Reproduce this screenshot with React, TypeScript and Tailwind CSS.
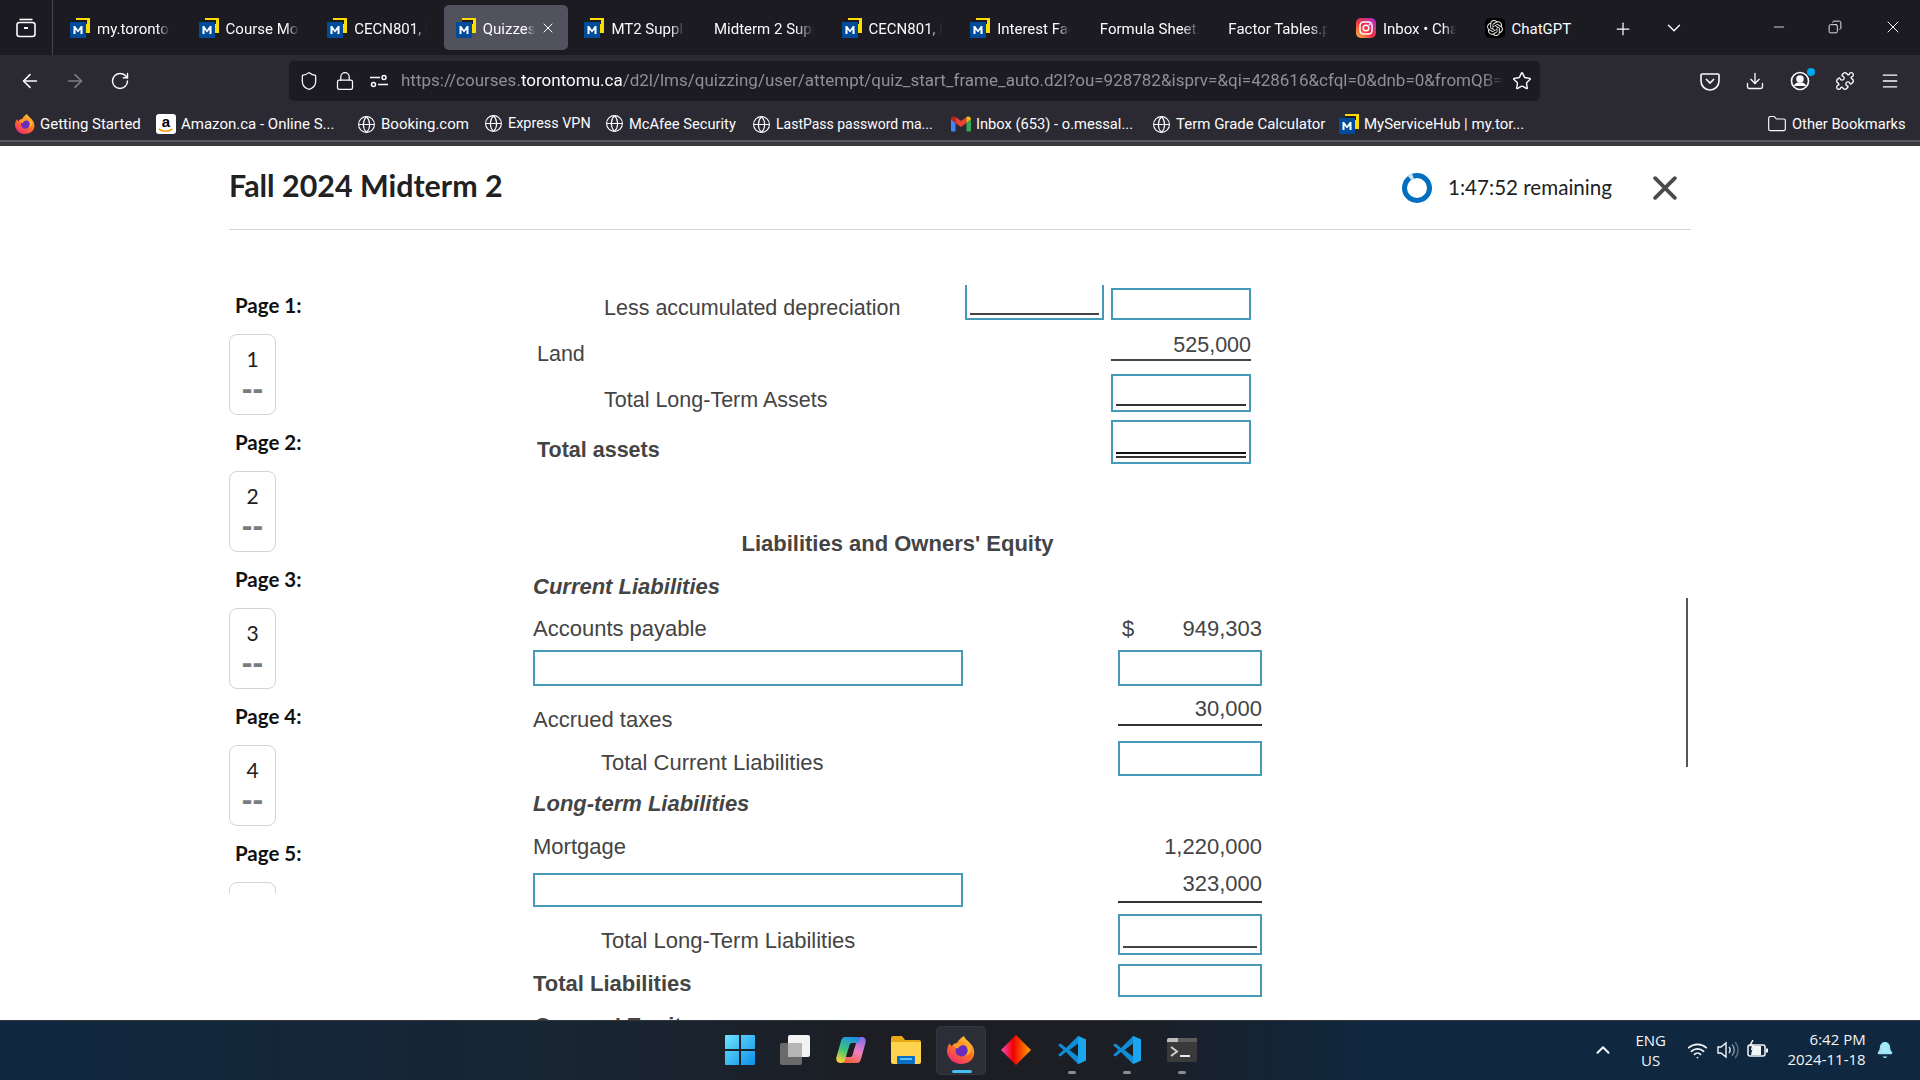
import React from "react";
import {
  ArrowLeft, ArrowRight, RotateCw, Shield, Lock, Star, Download, Menu, Puzzle, Globe, Folder, Plus,
  ChevronDown, ChevronUp, Minus, X, Wifi, Bell, Copy,
} from "lucide-react";
import { SiOpenai } from "react-icons/si";

const chromeFont = "font-['Roboto','Liberation_Sans',sans-serif]";
const sheetFont = "font-['Liberation_Sans',Arial,sans-serif]";
const fade = "[mask-image:linear-gradient(to_right,black_82%,transparent)]";

function MLogo({ className = "" }: { className?: string }) {
  return (
    <svg viewBox="0 0 20 20" className={`w-5 h-5 shrink-0 ${className}`}>
      <rect x="6" y="0" width="14" height="15" fill="#ffdc00" />
      <rect x="6" y="2" width="11" height="4" fill="#1c1b22" />
      <rect x="0" y="4" width="16" height="16" fill="#004c9b" />
      <path d="M3.5 16V8h1.7l2.8 4 2.8-4h1.7v8h-2v-4.6L8 14.6l-2.500-3.200V16z" fill="#fff" />
    </svg>
  );
}

function Instagram() {
  return (
    <svg viewBox="0 0 20 20" className="w-5 h-5 shrink-0">
      <defs>
        <linearGradient id="ig" x1="0" y1="1" x2="1" y2="0">
          <stop offset="0" stopColor="#fdc04a" />
          <stop offset="0.45" stopColor="#f5323f" />
          <stop offset="1" stopColor="#a52fd6" />
        </linearGradient>
      </defs>
      <rect width="20" height="20" rx="5" fill="url(#ig)" />
      <rect x="4" y="4" width="12" height="12" rx="3.500" fill="none" stroke="#fff" strokeWidth="1.500" />
      <circle cx="10" cy="10" r="2.800" fill="none" stroke="#fff" strokeWidth="1.500" />
      <circle cx="13.600" cy="6.400" r="0.900" fill="#fff" />
    </svg>
  );
}

function FirefoxIcon({ size }: { size: number }) {
  return (
    <svg viewBox="0 0 28 28" style={{ width: size, height: size }} className="shrink-0">
      <defs>
        <linearGradient id={`ff${size}`} x1="0.8" y1="0" x2="0.2" y2="1">
          <stop offset="0" stopColor="#ffd23f" />
          <stop offset="0.45" stopColor="#ff7a1a" />
          <stop offset="1" stopColor="#f0247a" />
        </linearGradient>
      </defs>
      <path d="M17 0c1 3 3 4 6 7 3 3 5 7 4 12-1 5-6 9-13 9C7 28 1 23 0 16c0-4 1-7 3-9 0 2 1 3 2 3 1-2 3-3 5-3 1-3 4-5 7-7z" fill={`url(#ff${size})`} />
      <circle cx="14.500" cy="14.500" r="6" fill="#6a2bc0" />
      <path d="M6 9c3-2 9-3 13 0-4-.5-7 1-8 3.500-2 0-4-1.500-5-3.500z" fill="#ff9a2e" />
      <path d="M19 8c3 3 3 9-1 12 3-1 6-3 6-7 0-2-2-4-5-5z" fill="#ffb52e" />
    </svg>
  );
}

function AmazonIcon() {
  return (
    <div className="relative w-5 h-5 rounded-[3px] bg-white shrink-0 flex justify-center">
      <span className="font-['Liberation_Sans',sans-serif] font-bold text-[15px] leading-[15px] text-black">a</span>
      <svg viewBox="0 0 20 6" className="absolute bottom-[1px] left-[2px] w-4 h-[5px]">
        <path d="M1 1c5 4 12 4 17 0" fill="none" stroke="#f90" strokeWidth="2" />
      </svg>
    </div>
  );
}

function GmailIcon() {
  return (
    <svg viewBox="0 0 20 16" className="w-5 h-4 shrink-0">
      <path d="M0 3v11c0 1 .5 1.500 1.500 1.500H4.500V7z" fill="#4285f4" />
      <path d="M15.500 7v8.500h3c1 0 1.500-.5 1.500-1.500V3z" fill="#34a853" />
      <path d="M4.500 7 10 11l5.500-4V1L10 5 4.500 1z" fill="#ea4335" />
      <path d="M0 3c0-2 2.500-3 4.500-2v6z" fill="#c5221f" />
      <path d="M20 3c0-2-2.500-3-4.500-2v6z" fill="#fbbc04" />
    </svg>
  );
}

function VSCode() {
  return (
    <svg viewBox="0 0 30 30" className="w-[30px] h-[30px] shrink-0">
      <path d="M21 1 9 13 3.500 8.500 1 10l5.500 5L1 20l2.500 1.500L9 17l12 12 8-3.500V4.500z" fill="#0f8ed8" />
      <path d="M21 1l8 3.500v21L21 29z" fill="#1ba5ef" />
      <path d="M21 8.500 12.500 15l8.500 6.500z" fill="#1c1e24" />
    </svg>
  );
}

function Tab({ label, icon, active }: { label: string; icon?: React.ReactNode; active?: boolean }) {
  return (
    <div className={`w-[124px] h-[45px] mr-[4.6px] shrink-0 rounded-[5px] flex items-center pl-[12px] ${active ? "bg-[#52525e]" : ""}`}>
      {icon}
      <span className={`${icon ? "ml-[7px]" : "ml-[1px]"} mt-[3px] ${active ? "w-[52px]" : icon ? "w-[73px]" : "w-[100px]"} overflow-hidden whitespace-nowrap text-[15px] text-[#fbfbfe] ${fade}`}>
        {label}
      </span>
      {active && <X className="w-4 h-4 ml-[5px] text-[#fbfbfe]" strokeWidth={1.500} />}
    </div>
  );
}

function TabBar() {
  const m = <MLogo />;
  return (
    <div className={`h-[55px] bg-[#1c1b22] flex items-center ${chromeFont} shrink-0`}>
      <div className="w-[53px] h-full flex items-center justify-center border-r border-[#45454c] shrink-0">
        <svg viewBox="0 0 20 20" className="w-5 h-5" fill="none" stroke="#fbfbfe" strokeWidth="1.600">
          <rect x="1" y="4.500" width="18" height="14" rx="2.500" />
          <path d="M3.500 1.500h13" />
          <path d="M8 10h4" strokeWidth="2" />
        </svg>
      </div>
      <div className="w-[5px] shrink-0" />
      <Tab label="my.toronto" icon={m} />
      <Tab label="Course Mo" icon={m} />
      <Tab label="CECN801, M" icon={m} />
      <Tab label="Quizzes" icon={m} active />
      <Tab label="MT2 Supple" icon={m} />
      <Tab label="Midterm 2 Supp" />
      <Tab label="CECN801, M" icon={m} />
      <Tab label="Interest Fac" icon={m} />
      <Tab label="Formula Sheet.pdf" />
      <Tab label="Factor Tables.pdf" />
      <Tab label="Inbox • Chats" icon={<Instagram />} />
      <div className="w-[124px] mr-[4.6px] shrink-0 flex items-center pl-[12px]">
        <div className="w-5 h-5 rounded-[5px] bg-black flex items-center justify-center shrink-0">
          <SiOpenai className="w-4 h-4 text-[#e5e5e5]" />
        </div>
        <span className="ml-[7px] mt-[3px] text-[15px] text-[#fbfbfe]">ChatGPT</span>
      </div>
      <Plus className="w-[20px] h-[20px] ml-[12px] mt-[2px] text-[#fbfbfe]" strokeWidth={1.500} />
      <ChevronDown className="w-[22px] h-[22px] ml-[30px] text-[#fbfbfe]" strokeWidth={1.500} />
      <Minus className="w-[16px] h-[16px] ml-[86px] mb-[1px] text-[#fbfbfe]" strokeWidth={1.200} />
      <Copy className="w-[14px] h-[14px] ml-[41px] mb-[1px] text-[#fbfbfe] -scale-x-100" strokeWidth={1.500} />
      <X className="w-[20px] h-[20px] ml-[41px] mb-[1px] text-[#fbfbfe]" strokeWidth={1.200} />
    </div>
  );
}

function UrlBar() {
  return (
    <div className="w-[1251px] h-[40px] ml-[159px] rounded-[5px] bg-[#1c1b22] flex items-center text-[#fbfbfe]">
      <Shield className="w-5 h-5 ml-[10px]" strokeWidth={1.500} />
      <Lock className="w-5 h-5 ml-[16px]" strokeWidth={1.500} />
      <svg viewBox="0 0 18 14" className="w-[18px] h-[14px] ml-[15px]" fill="none" stroke="#fbfbfe" strokeWidth="1.500">
        <path d="M0 3.500h10M8 10.500h10" />
        <circle cx="14" cy="3.500" r="2" />
        <circle cx="3.500" cy="10.500" r="2" />
      </svg>
      <div className="w-[1104px] ml-[13px] overflow-hidden whitespace-nowrap text-[17px] text-[#8f8f96] [mask-image:linear-gradient(to_right,black_98%,transparent)]">
        https://courses.<span className="text-[#fbfbfe]">torontomu.ca</span>/d2l/lms/quizzing/user/attempt/quiz_start_frame_auto.d2l?ou=928782&amp;isprv=&amp;qi=428616&amp;cfql=0&amp;dnb=0&amp;fromQB=1
      </div>
      <Star className="w-5 h-5 ml-[7px]" strokeWidth={1.700} />
    </div>
  );
}

function Toolbar() {
  return (
    <div className="h-[45px] mt-[3px] flex items-center text-[#fbfbfe] shrink-0">
      <ArrowLeft className="w-[22px] h-[22px] ml-[19px]" strokeWidth={1.700} />
      <ArrowRight className="w-[22px] h-[22px] ml-[23px] text-[#7d7d85]" strokeWidth={1.700} />
      <RotateCw className="w-5 h-5 ml-[24px]" strokeWidth={1.700} />
      <UrlBar />
      <svg viewBox="0 0 20 20" className="w-5 h-5 ml-[160px]" fill="none" stroke="#fbfbfe" strokeWidth="1.600">
        <path d="M2 3h16a1 1 0 0 1 1 1v6a9 9 0 0 1-18 0V4a1 1 0 0 1 1-1z" />
        <path d="M6 8l4 4 4-4" />
      </svg>
      <Download className="w-5 h-5 ml-[25px]" strokeWidth={1.600} />
      <div className="relative ml-[25px]">
        <svg viewBox="0 0 20 20" className="w-5 h-5" fill="none" stroke="#fbfbfe" strokeWidth="1.600">
          <circle cx="10" cy="10" r="8.500" />
          <circle cx="10" cy="8" r="3" fill="#fbfbfe" />
          <path d="M4.500 15c1-2 3-3 5.500-3s4.500 1 5.500 3" fill="#fbfbfe" />
        </svg>
        <span className="absolute -top-[3px] -right-[5px] w-[8px] h-[8px] rounded-full bg-[#00a8f0]" />
      </div>
      <Puzzle className="w-5 h-5 ml-[25px]" strokeWidth={1.600} />
      <Menu className="w-5 h-5 ml-[25px]" strokeWidth={1.600} />
    </div>
  );
}

function Bookmark({ icon, label, w, cls = "text-[15px]" }: { icon: React.ReactNode; label: string; w: string; cls?: string }) {
  return (
    <div className={`${w} shrink-0 flex items-center gap-[5px] whitespace-nowrap overflow-hidden`}>
      {icon}
      <span className={`${cls} text-[#fbfbfe]`}>{label}</span>
    </div>
  );
}

function Bookmarks() {
  const g = <Globe className="w-[19px] h-[19px] shrink-0 text-[#fbfbfe]" strokeWidth={1.400} />;
  return (
    <div className="shrink-0 bg-[#38383d]">
      <div className="h-[32px] pt-[5px] box-content flex items-center pl-[15px] bg-[#2b2a33] border-b-2 border-[#56565b]">
        <Bookmark w="w-[141px]" icon={<FirefoxIcon size={20} />} label="Getting Started" />
        <Bookmark w="w-[201px]" icon={<AmazonIcon />} label="Amazon.ca - Online S..." />
        <Bookmark w="w-[127px]" icon={g} label="Booking.com" />
        <Bookmark w="w-[121px]" icon={g} cls="text-[14.4px]" label="Express VPN" />
        <Bookmark w="w-[147px]" icon={g} cls="text-[14.7px]" label="McAfee Security" />
        <Bookmark w="w-[199px]" icon={g} cls="text-[14px]" label="LastPass password ma..." />
        <Bookmark w="w-[201px]" icon={<GmailIcon />} cls="text-[14.7px]" label="Inbox (653) - o.messal..." />
        <Bookmark w="w-[187px]" icon={g} label="Term Grade Calculator" />
        <Bookmark w="w-[428px]" icon={<MLogo />} label="MyServiceHub | my.tor..." />
        <Bookmark w="w-[140px]" icon={<Folder className="w-5 h-5 shrink-0 text-[#fbfbfe]" strokeWidth={1.400} />} cls="text-[14.7px]" label="Other Bookmarks" />
      </div>
      <div className="h-[4px]" />
    </div>
  );
}

function PageCard({ n, label }: { n: number; label: string }) {
  return (
    <div className="mb-[15px] shrink-0">
      <div className="h-[24px] pl-[6px] leading-[24px] text-[20.5px] font-bold text-[#111]">{label}</div>
      <div className="mt-[17px] w-[47px] h-[81px] rounded-[8px] border border-[#cdd5dc] flex flex-col items-center text-[#202122]">
        <span className="mt-[11px] text-[21px] leading-[26px]">{n}</span>
        <span className="mt-[4px] text-[32px] leading-[24px] font-bold text-[#777c80] font-['Liberation_Sans',sans-serif]">--</span>
      </div>
    </div>
  );
}

function Sidebar() {
  return (
    <div className="w-[304px] h-[608px] shrink-0 overflow-hidden pt-[8px] font-['Lato',sans-serif]">
      <PageCard n={1} label="Page 1:" />
      <PageCard n={2} label="Page 2:" />
      <PageCard n={3} label="Page 3:" />
      <PageCard n={4} label="Page 4:" />
      <PageCard n={5} label="Page 5:" />
    </div>
  );
}

const boxCls = "border-2 border-[#469ab6] bg-white shrink-0";
const txt = "text-[22px] leading-[28px] text-[#444] whitespace-nowrap";
const txtU = "text-[21.5px] leading-[28px] text-[#444] whitespace-nowrap";
const bold = "text-[22px] leading-[28px] text-[#444] font-bold whitespace-nowrap";
const boldU = "text-[21.5px] leading-[28px] text-[#444] font-bold whitespace-nowrap";
const boldItalic = "text-[22px] leading-[28px] text-[#444] font-bold italic whitespace-nowrap";

function BalanceSheet() {
  return (
    <div className={`flex-1 h-[735px] ${sheetFont}`}>
      <div className="w-[718px]">
        <div className="h-[35px] flex">
          <div className={`${txtU} pl-[71px] pt-[9px] w-[432px]`}>Less accumulated depreciation</div>
          <div className={`${boxCls} border-t-0 w-[139px] h-[35px] flex items-end px-[3px] pb-[3px]`}>
            <div className="w-full h-[2px] bg-[#444]" />
          </div>
          <div className={`${boxCls} ml-[7px] mt-[3px] w-[140px] h-[32px]`} />
        </div>
        <div className="h-[41px] flex justify-between">
          <div className={`${txtU} pl-[4px] pt-[20px]`}>Land</div>
          <div className={`${txtU} w-[140px] h-[41px] pt-[11px] text-right border-b-2 border-[#444]`}>525,000</div>
        </div>
        <div className="mt-[13px] h-[38px] flex justify-between">
          <div className={`${txtU} pl-[71px] pt-[12px]`}>Total Long-Term Assets</div>
          <div className={`${boxCls} w-[140px] h-[38px] flex items-end px-[3px] pb-[4px]`}>
            <div className="w-full h-[2px] bg-[#333]" />
          </div>
        </div>
        <div className="mt-[8px] h-[44px] flex justify-between">
          <div className={`${boldU} pl-[4px] pt-[16px]`}>Total assets</div>
          <div className={`${boxCls} w-[140px] h-[44px] flex flex-col justify-end gap-[2px] px-[3px] pb-[4px]`}>
            <div className="w-full h-[2px] bg-[#111]" />
            <div className="w-full h-[2px] bg-[#333]" />
          </div>
        </div>
      </div>
      <div className="w-[729px]">
        <div className={`${bold} mt-[66px] text-center`}>Liabilities and Owners' Equity</div>
        <div className={`${boldItalic} mt-[15px]`}>Current Liabilities</div>
        <div className="mt-[14px] flex justify-between">
          <div className={txt}>Accounts payable</div>
          <div className={`${txt} w-[140px] flex justify-between`}>
            <span>$</span>
            <span>949,303</span>
          </div>
        </div>
        <div className="mt-[7px] h-[36px] flex justify-between">
          <div className={`${boxCls} w-[430px] h-[36px]`} />
          <div className={`${boxCls} w-[144px] h-[36px]`} />
        </div>
        <div className="h-[40px] flex justify-between">
          <div className={`${txt} pt-[20px]`}>Accrued taxes</div>
          <div className={`${txt} w-[144px] h-[40px] pt-[9px] text-right border-b-2 border-[#333]`}>30,000</div>
        </div>
        <div className="mt-[15px] h-[35px] flex justify-between">
          <div className={`${txt} pl-[68px] pt-[8px]`}>Total Current Liabilities</div>
          <div className={`${boxCls} w-[144px] h-[35px]`} />
        </div>
        <div className={`${boldItalic} mt-[14px]`}>Long-term Liabilities</div>
        <div className="mt-[15px] flex justify-between">
          <div className={txt}>Mortgage</div>
          <div className={txt}>1,220,000</div>
        </div>
        <div className="mt-[12px] h-[34px] flex justify-between">
          <div className={`${boxCls} w-[430px] h-[34px]`} />
          <div className="text-[22px] leading-[22px] text-[#444] whitespace-nowrap w-[144px] h-[30px] text-right border-b-2 border-[#333]">323,000</div>
        </div>
        <div className="mt-[7px] h-[41px] flex justify-between">
          <div className={`${txt} pl-[68px] pt-[13px]`}>Total Long-Term Liabilities</div>
          <div className={`${boxCls} w-[144px] h-[41px] flex items-end px-[3px] pb-[5px]`}>
            <div className="w-full h-[2px] bg-[#444]" />
          </div>
        </div>
        <div className="mt-[9px] h-[33px] flex justify-between">
          <div className={`${bold} pt-[6px]`}>Total Liabilities</div>
          <div className={`${boxCls} w-[144px] h-[33px]`} />
        </div>
        <div className={`${boldItalic} mt-[15px]`}>Owners' Equity</div>
      </div>
    </div>
  );
}

function Page() {
  return (
    <div className="relative flex-1 min-h-0 overflow-hidden bg-white px-[229px]">
      <div className="h-[84px] flex items-center border-b border-[#cdd5dc] font-['Lato',sans-serif]">
        <h1 className="flex-1 text-[30.4px] font-bold text-[#202122] pb-[4px]">Fall 2024 Midterm 2</h1>
        <svg viewBox="0 0 30 30" className="w-[30px] h-[30px]">
          <circle cx="15" cy="15" r="12.500" fill="none" stroke="#006fbf" strokeWidth="5" />
          <path d="M7.500 5A12.500 12.500 0 0 1 11 3.100" fill="none" stroke="#cde3f3" strokeWidth="5" />
        </svg>
        <span className="ml-[16px] text-[20.6px] text-[#202122]">1:47:52 remaining</span>
        <svg viewBox="0 0 22 22" className="w-[24px] h-[24px] ml-[41px] mr-[14px]" fill="none" stroke="#494c4e" strokeWidth="3.500" strokeLinecap="round">
          <path d="M2 2l18 18M20 2 2 20" />
        </svg>
      </div>
      <div className="flex pt-[55px]">
        <Sidebar />
        <BalanceSheet />
      </div>
      <div className="absolute left-[1686px] top-[452px] w-[2px] h-[169px] bg-[#555]" />
    </div>
  );
}

function TrayText({ a, b, cls }: { a: string; b: string; cls: string }) {
  return (
    <div className={`flex flex-col ${cls} text-[15px] leading-[20px] text-[#f3f5f7] font-['Open_Sans',sans-serif]`}>
      <span>{a}</span>
      <span>{b}</span>
    </div>
  );
}

function TaskIcon({ children, box, dot }: { children: React.ReactNode; box?: boolean; dot?: "blue" | "gray" }) {
  return (
    <div className={`relative w-[50px] h-[49px] mr-[5.3px] shrink-0 rounded-[5px] flex items-center justify-center ${box ? "bg-[#2b2e37] border border-[#343741]" : ""}`}>
      {children}
      {dot === "blue" && <span className="absolute bottom-[1px] left-[15px] w-[20px] h-[3px] rounded-full bg-[#46bdf5]" />}
      {dot === "gray" && <span className="absolute bottom-[1px] left-[21px] w-[8px] h-[3px] rounded-full bg-[#8a8d92]" />}
    </div>
  );
}

function Taskbar() {
  return (
    <div className="h-[60px] shrink-0 flex items-center pb-[1px] border-t border-[#33353a] bg-[linear-gradient(to_right,#0f2840_0%,#1a2430_35%,#1c1e24_45%,#1c1e24_58%,#0f2840_72%,#0f2840_100%)]">
      <div className="w-[715px] shrink-0" />
      <TaskIcon>
        <svg viewBox="0 0 30 30" className="w-[30px] h-[30px]">
          <defs>
            <linearGradient id="win" x1="0" y1="0" x2="1" y2="1">
              <stop offset="0" stopColor="#6fe3ff" />
              <stop offset="1" stopColor="#0c8fe8" />
            </linearGradient>
          </defs>
          <path d="M0 1a1 1 0 0 1 1-1h13v14H0zM16 0h13a1 1 0 0 1 1 1v13H16zM0 16h14v14H1a1 1 0 0 1-1-1zM16 16h14v13a1 1 0 0 1-1 1H16z" fill="url(#win)" />
        </svg>
      </TaskIcon>
      <TaskIcon>
        <svg viewBox="0 0 30 30" className="w-[30px] h-[30px]">
          <rect x="0" y="8" width="22" height="22" rx="2" fill="#6a6a6a" />
          <rect x="8" y="0" width="22" height="22" rx="2" fill="#f2f2f2" />
          <rect x="8" y="8" width="14" height="14" fill="#b5b5b5" />
        </svg>
      </TaskIcon>
      <TaskIcon>
        <svg viewBox="0 0 30 30" className="w-[30px] h-[30px]">
          <defs>
            <linearGradient id="cp1" x1="0.7" y1="0" x2="0.3" y2="1">
              <stop offset="0" stopColor="#1f8fe8" />
              <stop offset="0.55" stopColor="#3fc37a" />
              <stop offset="1" stopColor="#f5d23b" />
            </linearGradient>
            <linearGradient id="cp2" x1="0.7" y1="0" x2="0.3" y2="1">
              <stop offset="0" stopColor="#8a6cf0" />
              <stop offset="0.5" stopColor="#f07fc0" />
              <stop offset="1" stopColor="#f5613a" />
            </linearGradient>
          </defs>
          <path d="M21 28H9c-2 0-3-1-3-2l2-4h6c1 0 2-.5 2.500-2L21 5c.5-2 2-3 4-3h1c3 0 4.500 3 3.500 6L25 24c-.7 2.500-2 4-4 4z" fill="url(#cp2)" />
          <path d="M9 2h12c2 0 3 1 3 2l-2 4h-6c-1 0-2 .5-2.500 2L9 25c-.5 2-2 3-4 3H4c-3 0-4.500-3-3.500-6L5 6c.7-2.500 2-4 4-4z" fill="url(#cp1)" />
        </svg>
      </TaskIcon>
      <TaskIcon>
        <svg viewBox="0 0 30 28" className="w-[30px] h-[28px]">
          <path d="M0 2a2 2 0 0 1 2-2h9l3 4h14a2 2 0 0 1 2 2v4H0z" fill="#e8a818" />
          <path d="M0 6h30v20a2 2 0 0 1-2 2H2a2 2 0 0 1-2-2z" fill="#ffd34e" />
          <rect x="6" y="20" width="18" height="8" rx="1" fill="#0a6fc2" />
          <rect x="9" y="22" width="12" height="2" fill="#5cc0f5" />
        </svg>
      </TaskIcon>
      <TaskIcon box dot="blue">
        <FirefoxIcon size={28} />
      </TaskIcon>
      <TaskIcon>
        <svg viewBox="0 0 30 30" className="w-[30px] h-[30px]">
          <defs>
            <linearGradient id="dia" x1="0" y1="0" x2="1" y2="0">
              <stop offset="0" stopColor="#f54fc0" />
              <stop offset="0.4" stopColor="#f00000" />
              <stop offset="1" stopColor="#ffa500" />
            </linearGradient>
          </defs>
          <path d="M15 0 30 15 15 30 0 15z" fill="url(#dia)" />
        </svg>
      </TaskIcon>
      <TaskIcon dot="gray"><VSCode /></TaskIcon>
      <TaskIcon dot="gray"><VSCode /></TaskIcon>
      <TaskIcon dot="gray">
        <svg viewBox="0 0 30 24" className="w-[30px] h-[24px]">
          <rect width="30" height="24" rx="2" fill="#3a3a3a" />
          <path d="M0 2a2 2 0 0 1 2-2h9v4H0z" fill="#bdbdbd" />
          <rect x="11" y="0" width="19" height="4" fill="#5c5c5c" />
          <path d="M4 9l6 4.500L4 18" fill="none" stroke="#d0d0d0" strokeWidth="2" />
          <rect x="13" y="17" width="10" height="2" fill="#e8e8e8" />
        </svg>
      </TaskIcon>
      <ChevronUp className="w-[22px] h-[22px] ml-[379px] text-[#f3f5f7]" strokeWidth={2.200} />
      <TrayText a="ENG" b="US" cls="ml-[22px] w-[30px] items-center" />
      <Wifi className="w-[21px] h-[21px] ml-[21px] text-[#f3f5f7]" strokeWidth={2} />
      <svg viewBox="0 0 22 20" className="w-[22px] h-[20px] ml-[9px]" fill="none" strokeWidth="1.400">
        <path d="M1 7v6h3l5 4V3L4 7z" stroke="#f3f5f7" />
        <path d="M12 7c1.500 1.500 1.500 4.500 0 6" stroke="#f3f5f7" />
        <path d="M15 4.500c3 3 3 8 0 11" stroke="#8d98a3" />
        <path d="M18 2c4 4 4 12 0 16" stroke="#5b6a78" />
      </svg>
      <svg viewBox="0 0 22 20" className="w-[22px] h-[20px] ml-[8px]" fill="none" stroke="#f3f5f7" strokeWidth="1.500">
        <rect x="1" y="5" width="17" height="11" rx="2" />
        <path d="M6 6h8v9H4z" fill="#f3f5f7" stroke="none" />
        <path d="M20 8.500v4" strokeWidth="2" />
        <path d="M6 0 3 5.500h3L4.500 10" stroke="#f3f5f7" />
      </svg>
      <TrayText a="6:42 PM" b="2024-11-18" cls="w-[90px] ml-[7px] items-end -mt-[2px]" />
      <Bell className="w-[18px] h-[20px] ml-[10px] text-[#a4e8fa] fill-[#a4e8fa]" strokeWidth={1.500} />
    </div>
  );
}

export default function App() {
  return (
    <div className="w-[1920px] h-[1080px] flex flex-col overflow-hidden bg-white">
      <TabBar />
      <div className={`bg-[#2b2a33] shrink-0 ${chromeFont}`}>
        <Toolbar />
        <Bookmarks />
      </div>
      <Page />
      <Taskbar />
    </div>
  );
}
